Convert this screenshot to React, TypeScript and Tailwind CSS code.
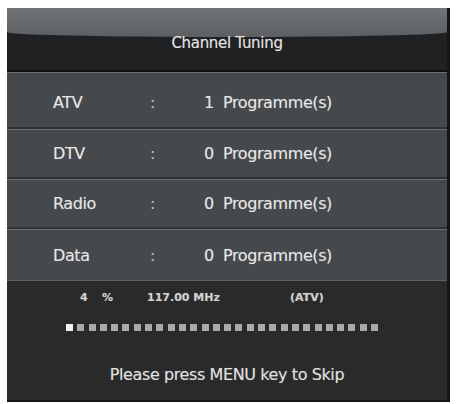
import React from "react";

const rows = [
  { label: "ATV", count: 1, h: "h-[57px] pt-[5px]" },
  { label: "DTV", count: 0, h: "h-[50px] pt-[1px]" },
  { label: "Radio", count: 0, h: "h-[50px] pt-[1px]" },
  { label: "Data", count: 0, h: "h-[52px] pt-[1px]" },
];

const font = {
  fontFamily: '"DejaVu Sans", Verdana, sans-serif',
  textShadow: "0 0 1px rgba(230,230,230,0.35)",
};

export default function App() {
  const blocks = Array.from({ length: 28 }, (_, i) => i);
  return (
    <div className="w-[456px] h-[404px] bg-white pt-[8px] pl-[7px]" style={font}>
      <div className="w-[443px] h-[394px] flex flex-col bg-[#2a2a2a] border-r-[3px] border-b-[2px] border-[#151515] overflow-hidden">
        {/* header with glossy top half */}
        <div className="relative h-[62px] bg-[#1f2123] flex items-center justify-center">
          <div className="absolute left-0 right-0 top-0 h-[29px] bg-gradient-to-b from-[#717477] to-[#5d6063] rounded-b-[50%_5px]" />
          <span className="relative mt-[8px] text-[15px] text-[#e4e4e4] tracking-[-0.3px]">Channel Tuning</span>
        </div>
        <div className="h-[2px] bg-[#0e0f10]" />
        <div className="flex flex-col bg-[#46494c]">
          {rows.map((r, i) => (
            <div
              key={r.label}
              className={`${r.h} flex items-center text-[16px] text-[#e6e6e6] tracking-[-0.4px] border-t border-t-[#6d7073] ${
                i < rows.length - 1 ? "border-b-2 border-b-[#2e3032]" : "border-b border-b-[#5e6164]"
              }`}
            >
              <span className="w-[143px] pl-[46px]">{r.label}</span>
              <span className="w-[54px] text-[#b8b8b8]">:</span>
              <span className="w-[19px]">{r.count}</span>
              <span>Programme(s)</span>
            </div>
          ))}
        </div>
        <div className="flex-1 flex flex-col bg-[#2a2a2a]">
          <div className="flex items-center h-[28px] mt-[3px] text-[11px] font-bold text-[#d0d0d0]">
            <span className="pl-[73px] w-[95px]">4</span>
            <span className="w-[45px]">%</span>
            <span className="w-[143px]">117.00 MHz</span>
            <span>(ATV)</span>
          </div>
          <div className="flex gap-[4.3px] pl-[59px] mt-[12px]">
            {blocks.map((b) => (
              <div
                key={b}
                className={`w-[7px] h-[7px] ${b === 0 ? "bg-[#f0f0f0]" : "bg-[#a9a9a9]"}`}
              />
            ))}
          </div>
          <div className="flex-1 flex items-center justify-center pt-[18px] text-[16px] text-[#e0e0e0] tracking-[-0.4px]">
            Please press MENU key to Skip
          </div>
        </div>
      </div>
    </div>
  );
}
